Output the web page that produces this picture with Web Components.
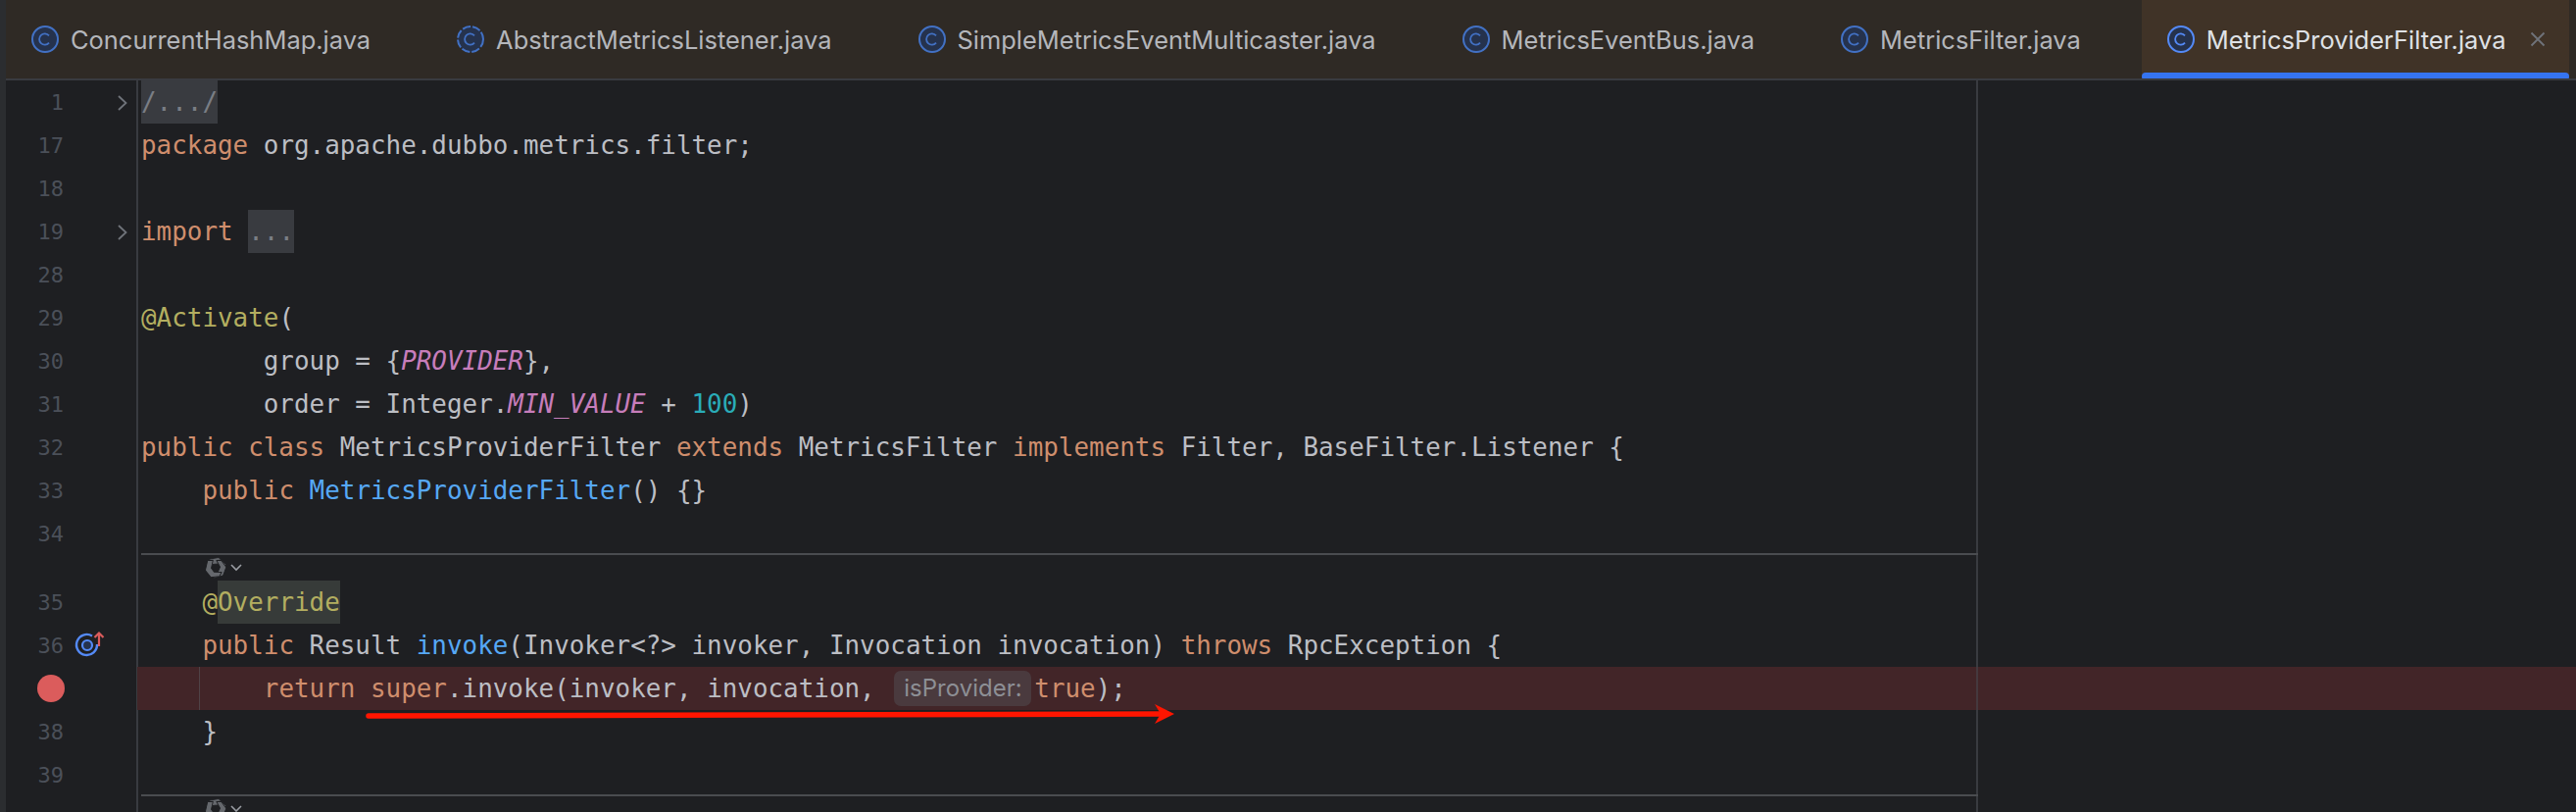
<!DOCTYPE html>
<html><head><meta charset="utf-8"><style>
html,body{margin:0;padding:0;background:#1e1f22;width:2628px;height:828px;overflow:hidden}
</style></head><body>
<ide-window>
<editor-tab-bar slot="tabs">
<editor-tab>ConcurrentHashMap.java</editor-tab>
<editor-tab abstract>AbstractMetricsListener.java</editor-tab>
<editor-tab>SimpleMetricsEventMulticaster.java</editor-tab>
<editor-tab>MetricsEventBus.java</editor-tab>
<editor-tab>MetricsFilter.java</editor-tab>
<editor-tab active>MetricsProviderFilter.java</editor-tab>
</editor-tab-bar>
<code-editor slot="editor">
<code-line n="1" fold><span class="f">/.../</span></code-line>
<code-line n="17"><span class="k">package</span> org.apache.dubbo.metrics.filter;</code-line>
<code-line n="18"></code-line>
<code-line n="19" fold><span class="k">import</span> <span class="f">...</span></code-line>
<code-line n="28"></code-line>
<code-line n="29"><span class="a">@Activate</span>(</code-line>
<code-line n="30">        group = {<span class="s">PROVIDER</span>},</code-line>
<code-line n="31">        order = Integer.<span class="s">MIN_VALUE</span> + <span class="u">100</span>)</code-line>
<code-line n="32"><span class="k">public class</span> MetricsProviderFilter <span class="k">extends</span> MetricsFilter <span class="k">implements</span> Filter, BaseFilter.Listener {</code-line>
<code-line n="33">    <span class="k">public</span> <span class="m">MetricsProviderFilter</span>() {}</code-line>
<code-line n="34"></code-line>
<vision-row></vision-row>
<code-line n="35">    <span class="a">@</span><span class="a h">Override</span></code-line>
<code-line n="36" target>    <span class="k">public</span> Result <span class="m">invoke</span>(Invoker&lt;?&gt; invoker, Invocation invocation) <span class="k">throws</span> RpcException {</code-line>
<code-line bp guide>        <span class="k">return</span> <span class="k">super</span>.invoke(invoker, invocation, <inlay-hint>isProvider:</inlay-hint><span class="k">true</span>);</code-line>
<code-line n="38">    }</code-line>
<code-line n="39"></code-line>
<vision-row></vision-row>
<red-arrow></red-arrow>
</code-editor>
</ide-window>
<script>
const MONO='"DejaVu Sans Mono","Liberation Mono",monospace';
const UI='Inter,"Liberation Sans",sans-serif';
function def(name,html){
  customElements.define(name,class extends HTMLElement{
    constructor(){super();const r=this.attachShadow({mode:'open'});r.innerHTML=html(this);}
  });
}
def('ide-window',()=>`<style>
:host{display:grid;grid-template-columns:6px 1fr;grid-template-rows:80px 1fr;width:2628px;height:828px;background:#1e1f22}
.strip{grid-row:1/3;background:#2b2d30}
.tabs{display:block;min-width:0}
.ed{display:block;min-width:0;min-height:0;overflow:hidden}
</style><div class="strip"></div><div class="tabs"><slot name="tabs"></slot></div><div class="ed"><slot name="editor"></slot></div>`);
def('editor-tab-bar',()=>`<style>
:host{display:flex;height:80px;background:#2f2a25;box-sizing:border-box}
</style><slot></slot>`);
def('editor-tab',(e)=>{
  const a=e.hasAttribute('active'),ab=e.hasAttribute('abstract');
  const c=a?'#548af7':'#4271c4';
  return `<style>
:host{display:flex;align-items:center;height:80px;box-sizing:border-box;padding:0 ${a?'0':'62px'} 0 26px;flex:none;position:relative;
 background:${a?'#403327':'transparent'};font:400 25.45px ${UI};color:${a?'#dfe1e5':'#b4b6bb'};white-space:nowrap;${a?'width:436px;':''}}
svg{flex:none;display:block;margin-right:12px}
.x{position:absolute;left:396px;top:32px}
.u{position:absolute;left:0;right:0;bottom:-2px;height:8px;border-radius:4px;background:#3574f0}
</style><svg width="28" height="28" viewBox="0 0 28 28"><circle cx="14" cy="14" r="13" fill="#25324d" stroke="${c}" stroke-width="2" ${ab?'stroke-dasharray="8.5 2"':''}/><path d="M18 10.4A5.6 5.6 0 1 0 18 17.6" fill="none" stroke="${c}" stroke-width="1.8"/></svg><slot></slot>
${a?'<svg class="x" width="16" height="16" viewBox="0 0 16 16" style="margin:0"><path d="M1.5 1.5L14.5 14.5M14.5 1.5L1.5 14.5" stroke="#6f737a" stroke-width="1.8"/></svg><div class="u"></div>':''}`});
def('code-editor',()=>`<style>
:host{display:block;position:relative;height:746px;border-top:2px solid #393b40;font:400 25.91px ${MONO};color:#bcbec4;
background:linear-gradient(#393b40,#393b40) 133px 0/2px 100% no-repeat,linear-gradient(#393b40,#393b40) 2010px 0/2px 100% no-repeat}
</style><slot></slot>`);
def('code-line',(e)=>{
  const bp=e.hasAttribute('bp');
  return `<style>
:host{display:grid;grid-template-columns:59px 76px 1fr;height:44px;line-height:44px;white-space:pre;position:relative;${bp?'background:linear-gradient(#422528,#422528) 134px 0/100% 100% no-repeat;':''}}
.n{font:400 22px/44px ${MONO};color:#4b5059;text-align:right;padding-top:1px}
.g{position:relative}
.c{padding-left:3px;position:relative}
::slotted(.k){color:#cf8e6d}
::slotted(.a){color:#b3ae60}
::slotted(.m){color:#56a8f5}
::slotted(.s){color:#c77dbb;font-style:italic}
::slotted(.u){color:#2aacb8}
::slotted(.f){color:#7a7e85;background:#393b40;display:inline-block;height:44px}
::slotted(.h){background:#373b39;display:inline-block;height:44px}
.gd{position:absolute;left:62px;top:0;width:1px;height:44px;background:#4f4347}
.rm{position:absolute;left:2010px;top:0;width:2px;height:44px;background:#45393e}
svg{position:absolute}
.bp{position:absolute;left:-27px;top:8px;width:28px;height:28px;border-radius:50%;background:#db5c5c}
</style><div class="n">${e.getAttribute('n')||''}</div><div class="g">
${e.hasAttribute('fold')?'<svg style="left:54px;top:14px" width="12" height="18" viewBox="0 0 12 18"><path d="M2 2L9.5 9L2 16" fill="none" stroke="#6f737a" stroke-width="1.8"/></svg>':''}
${bp?'<div class="bp"></div>':''}
${e.hasAttribute('target')?'<svg style="left:6px;top:4px" width="36" height="36" viewBox="0 0 36 36"><path d="M23 8.5A10.5 10.5 0 1 0 28 17" fill="none" stroke="#548af7" stroke-width="2.4"/><circle cx="18" cy="18" r="5" fill="#25324d" stroke="#548af7" stroke-width="2.2"/><path d="M30 19V5.5M25.5 10L30 5.5L34.5 10" fill="none" stroke="#db5c5c" stroke-width="2.2"/></svg>':''}
</div><div class="c">${e.hasAttribute('guide')?'<div class="gd"></div>':''}<slot></slot></div>${bp?'<div class="rm"></div>':''}`});
def('inlay-hint',()=>`<style>
:host{display:inline-block;font:400 24px/36px ${UI};color:#8d8f95;background:#4a3a3e;border-radius:7px;height:36px;width:140px;box-sizing:border-box;padding-left:10px;margin:0 3px 0 4px;vertical-align:1px;white-space:nowrap}
</style><slot></slot>`);
def('vision-row',()=>`<style>
:host{display:block;height:26px;position:relative}
.r{position:absolute;left:138px;top:-2px;width:1874px;height:2px;background:#4a4c50}
svg{position:absolute;top:1px;display:block}
</style><div class="r"></div>
<svg style="left:202px" width="24" height="24" viewBox="0 0 24 24" fill="#65686d" stroke="#1e1f22" stroke-width=".9" stroke-linejoin="round"><defs><path id="b" d="M6 3L15 1.5L22.5 8.5L20 13.5L14 8L9 8.5L5 15L2.5 11Z"/></defs><use href="#b"/><use href="#b" transform="rotate(120 12 12)"/><use href="#b" transform="rotate(240 12 12)"/></svg>
<svg style="left:228px;top:8px" width="14" height="10" viewBox="0 0 14 10"><path d="M2 2L7 7L12 2" fill="none" stroke="#9a9da3" stroke-width="1.6"/></svg>`);
def('red-arrow',()=>`<style>
:host{position:absolute;left:0;top:0;display:block;pointer-events:none}
svg{display:block;position:absolute;left:360px;top:630px}
</style><svg width="850" height="30" viewBox="0 0 850 30"><path d="M10 18L820 16" stroke="#ff1500" stroke-width="5.5" stroke-linecap="round" fill="none"/><path d="M832 16L812 6L818 16L812 26Z" fill="#ff1500"/></svg>`);
</script>
</body></html>
